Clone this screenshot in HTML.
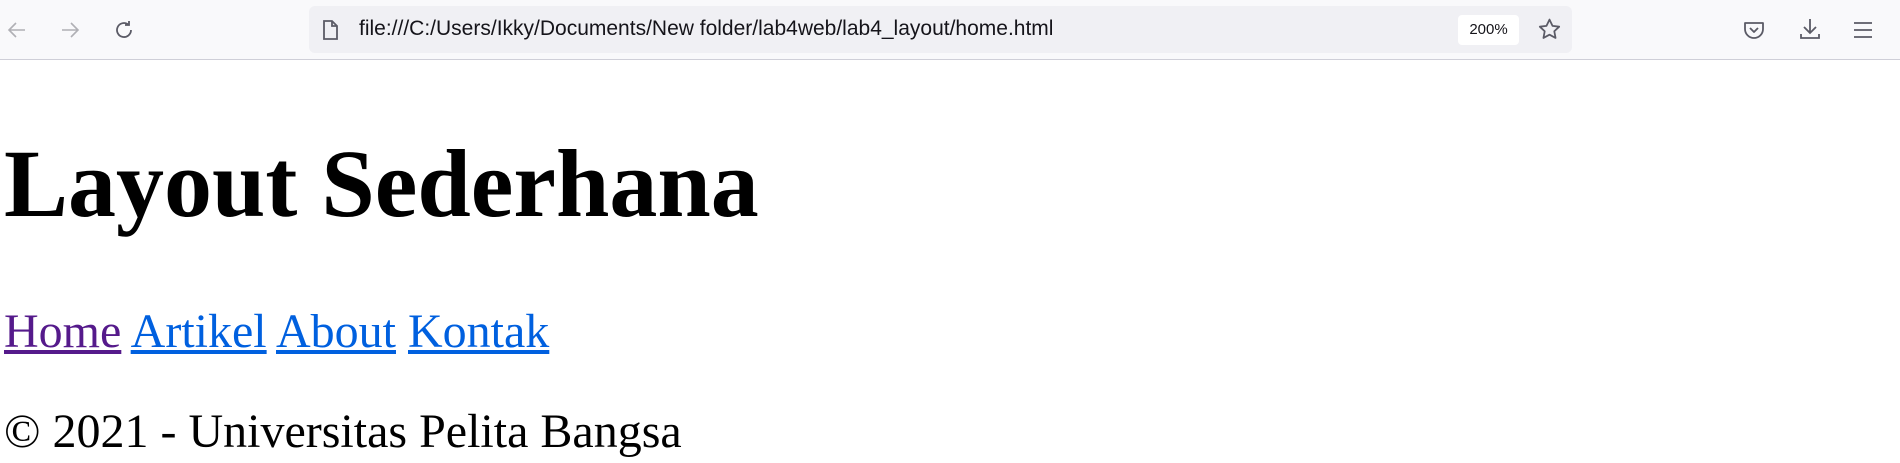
<!DOCTYPE html>
<html><head><meta charset="utf-8"><style>
html,body{margin:0;padding:0;width:1900px;height:463px;overflow:hidden;background:#fff;position:relative}
.tb{position:absolute;left:0;top:0;width:1900px;height:60px;background:#f9f9fb;border-bottom:1px solid #cfcfd8;box-sizing:border-box}
.url{position:absolute;left:309px;top:6px;width:1263px;height:47px;background:#f0f0f4;border-radius:6px}
.urltext{position:absolute;left:359px;top:17px;font:21px "Liberation Sans",sans-serif;color:#15141a;white-space:nowrap}
.zoom{position:absolute;left:1458px;top:15px;width:61px;height:30px;background:#fff;border-radius:4px;font:15px "Liberation Sans",sans-serif;color:#15141a;text-align:center;line-height:30px}
svg{position:absolute}
.t{position:absolute;left:4px;font-family:"Liberation Serif",serif;white-space:nowrap}
a{color:#0060df}
</style></head><body>
<div class="tb">
<svg style="left:5px;top:18px" width="24" height="24" viewBox="0 0 24 24" fill="none" stroke="#b0b0b5" stroke-width="1.6"><path d="M20 12H4M11 5l-7 7 7 7"/></svg>
<svg style="left:58px;top:18px" width="24" height="24" viewBox="0 0 24 24" fill="none" stroke="#b0b0b5" stroke-width="1.6"><path d="M4 12h16M13 5l7 7-7 7"/></svg>
<svg style="left:112px;top:18px" width="24" height="24" viewBox="0 0 24 24" fill="none" stroke="#5b5b66" stroke-width="1.8"><path d="M19 12a7 7 0 1 1-3-5.7"/><path d="M17 3v4h-4"/></svg>
<div class="url"></div>
<svg style="left:320px;top:19px" width="20" height="22" viewBox="0 0 20 22" fill="none" stroke="#5b5b66" stroke-width="1.8"><path d="M4 2h8l5 5v13H4z"/><path d="M12 2v5h5"/></svg>
<div class="urltext">file:///C:/Users/Ikky/Documents/New folder/lab4web/lab4_layout/home.html</div>
<div class="zoom">200%</div>
<svg style="left:1537px;top:17px" width="25" height="25" viewBox="0 0 24 24" fill="none" stroke="#5b5b66" stroke-width="1.7" stroke-linejoin="round"><path d="M12 2.5l2.9 6 6.4.8-4.7 4.4 1.2 6.4L12 17l-5.8 3.1 1.2-6.4-4.7-4.4 6.4-.8z"/></svg>
<svg style="left:1742px;top:18px" width="24" height="24" viewBox="0 0 24 24" fill="none" stroke="#5b5b66" stroke-width="1.8" stroke-linejoin="round"><path d="M3 5h18v6a9 9 0 0 1-18 0z"/><path d="M8 10l4 4 4-4"/></svg>
<svg style="left:1798px;top:16px" width="24" height="26" viewBox="0 0 24 26" fill="none" stroke="#5b5b66" stroke-width="1.8"><path d="M12 3v14M6 11l6 6 6-6M3 18v4h18v-4"/></svg>
<svg style="left:1852px;top:19px" width="22" height="22" viewBox="0 0 22 22" fill="none" stroke="#5b5b66" stroke-width="1.8"><path d="M2 4h18M2 11h18M2 18h18"/></svg>
</div>
<div class="t" style="top:136px;font-size:96px;line-height:96px;font-weight:bold">Layout Sederhana</div>
<div class="t" style="top:308px;font-size:48px;line-height:48px"><a href="#" style="color:#551a8b">Home</a> <a href="#">Artikel</a> <a href="#">About</a> <a href="#">Kontak</a></div>
<div class="t" style="top:408px;font-size:48px;line-height:48px">© 2021 - Universitas Pelita Bangsa</div>
</body></html>
